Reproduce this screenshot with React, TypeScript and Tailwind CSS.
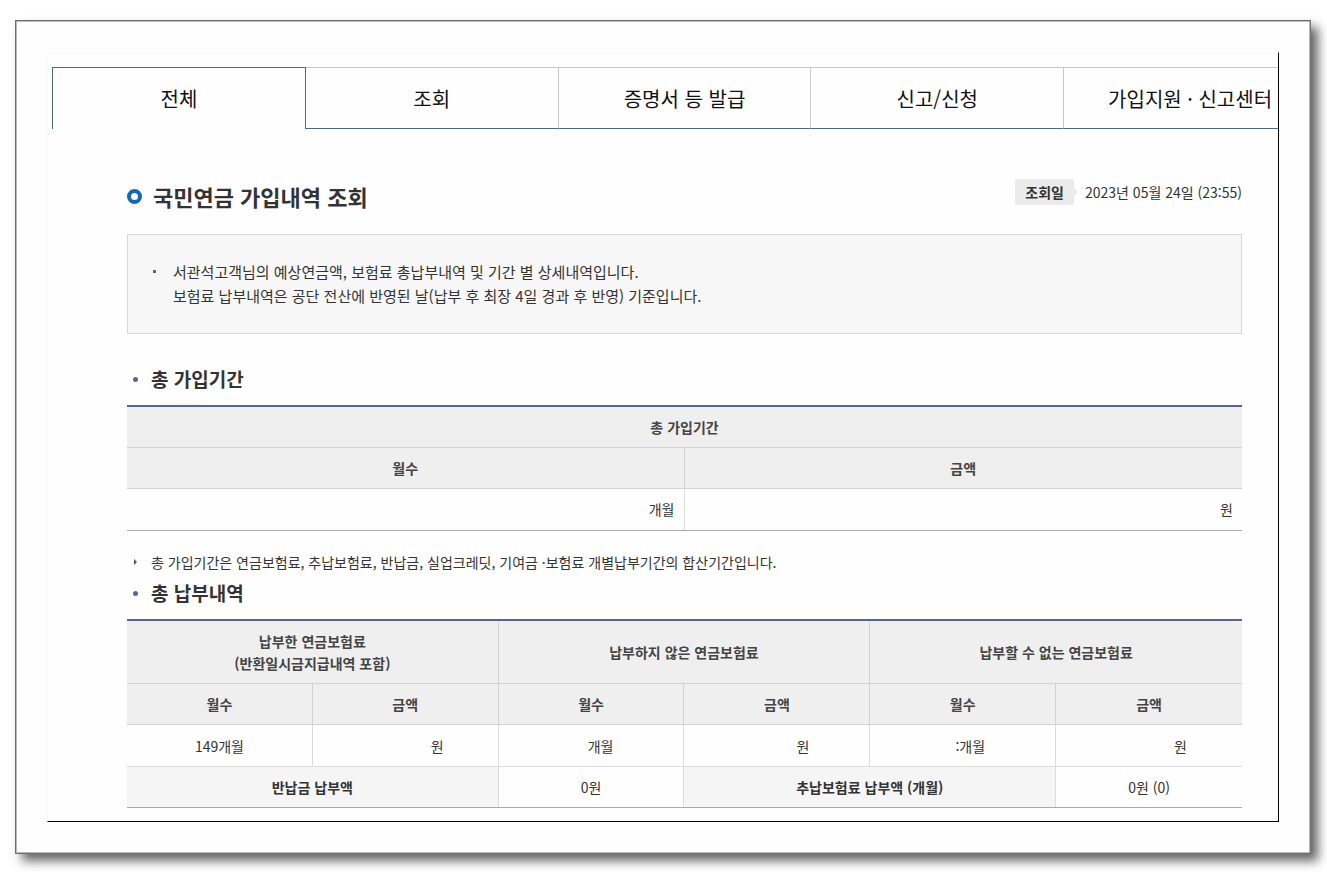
import type { ReactNode } from 'react'

const tabs = ['전체', '조회', '증명서 등 발급', '신고/신청', '가입지원 · 신고센터']

const groups = ['납부한 연금보험료', '납부하지 않은 연금보험료', '납부할 수 없는 연금보험료']

function SectionTitle({ children }: { children: ReactNode }) {
  return (
    <h3 className="flex items-center text-[19px] leading-7 font-bold text-[#333]">
      <span className="ml-1.5 mr-[13px] size-[5px] rounded-full bg-[#56659a]" />
      {children}
    </h3>
  )
}

function HeadCell({ children, span = 1 }: { children: ReactNode; span?: number }) {
  return (
    <th
      scope="col"
      colSpan={span}
      className="border-b border-r border-[#d2d2d2] last:border-r-0 bg-[#efefef] py-[9px] font-bold text-[#444]"
    >
      {children}
    </th>
  )
}

function Cell({ children, className = 'py-[9px] text-center' }: { children: ReactNode; className?: string }) {
  return (
    <td className={`border-r border-[#dcdcdc] last:border-r-0 ${className}`}>
      {children}
    </td>
  )
}

export default function App() {
  return (
    <div
      lang="ko"
      className="bg-white pt-5 pr-4 pb-[18px] pl-[15px] font-['Noto_Sans_CJK_KR',sans-serif] text-[14px] leading-[22px] text-[#333]"
    >
      <div className="border border-[#6f716f] bg-[#fefefe] p-[31px] shadow-[inset_0_0_0_1px_#b8bab8,7px_7px_10px_rgba(0,0,0,0.6)]">
        <main className="overflow-hidden border-t border-r border-b border-l border-t-[#fafafa] border-r-black border-b-black border-l-[#fafafa] pb-[13px]">
          {/* Tabs, the last one runs past the frame */}
          <nav className="mt-[14px] ml-1 flex w-[calc(100%+35px)]">
            {tabs.map((tab, i) => (
              <button
                key={tab}
                type="button"
                className={`h-[62px] flex-1 whitespace-nowrap pt-px text-[20px] text-[#111] ${
                  i === 0
                    ? 'border-t border-r border-l border-[#4b6a80]'
                    : 'border-t border-r border-b border-t-[#c8c8c8] border-r-[#c8c8c8] border-b-[#4b6a80]'
                }`}
              >
                {tab}
              </button>
            ))}
          </nav>

          <div className="pt-[50px] pr-9 pl-[79px]">
            <header className="flex items-start justify-between">
              <h2 className="flex items-center text-[22px] leading-[34px] font-bold text-[#333]">
                <span className="mr-[11px] size-[15px] rounded-full border-4 border-[#1468ad]" />
                국민연금 가입내역 조회
              </h2>
              <p className="flex items-center">
                <span className="rounded-xs bg-[#ebebeb] px-[10px] py-0.5 font-bold text-[#333]">조회일</span>
                <span className="mr-[7px] border-y-4 border-l-4 border-y-transparent border-l-[#ebebeb]" />
                2023년 05월 24일 (23:55)
              </p>
            </header>

            <div className="mt-[21px] flex border border-[#d8d8d8] bg-[#f7f7f7] px-[25px] py-[25px] text-[15px] leading-6">
              <span className="mt-[10px] mr-[17px] size-[3px] bg-[#666]" />
              <p>
                서관석고객님의 예상연금액, 보험료 총납부내역 및 기간 별 상세내역입니다.
                <br />
                보험료 납부내역은 공단 전산에 반영된 날(납부 후 최장 4일 경과 후 반영) 기준입니다.
              </p>
            </div>

            <section className="mt-[31px]">
              <SectionTitle>총 가입기간</SectionTitle>
              <table className="mt-3 w-full table-fixed border-separate border-spacing-0 border-t-2 border-b border-t-[#56678a] border-b-[#aaa]">
                <thead>
                  <tr>
                    <HeadCell span={2}>총 가입기간</HeadCell>
                  </tr>
                  <tr>
                    <HeadCell>월수</HeadCell>
                    <HeadCell>금액</HeadCell>
                  </tr>
                </thead>
                <tbody>
                  <tr>
                    <Cell className="pt-[9px] pr-[9px] pb-[10px] text-right">개월</Cell>
                    <Cell className="pt-[9px] pr-[9px] pb-[10px] text-right">원</Cell>
                  </tr>
                </tbody>
              </table>
              <p className="mt-5 flex items-center">
                <span className="mr-[14px] ml-[7px] border-y-[3px] border-l-[3px] border-y-transparent border-l-[#555]" />
                총 가입기간은 연금보험료, 추납보험료, 반납금, 실업크레딧, 기여금 ·보험료 개별납부기간의 합산기간입니다.
              </p>
            </section>

            <section className="mt-1.5">
              <SectionTitle>총 납부내역</SectionTitle>
              <table className="mt-3 w-full table-fixed border-separate border-spacing-0 border-t-2 border-b border-t-[#56678a] border-b-[#aaa]">
                <thead>
                  <tr>
                    {groups.map((group, i) => (
                      <HeadCell key={group} span={2}>
                        {group}
                        {i === 0 && (
                          <>
                            <br />
                            (반환일시금지급내역 포함)
                          </>
                        )}
                      </HeadCell>
                    ))}
                  </tr>
                  <tr>
                    {groups.map((group) => [
                      <HeadCell key={`${group}-months`}>월수</HeadCell>,
                      <HeadCell key={`${group}-amount`}>금액</HeadCell>,
                    ])}
                  </tr>
                </thead>
                <tbody>
                  <tr>
                    <Cell className="border-b pt-[10px] pb-[9px] text-center">149개월</Cell>
                    <Cell className="border-b pt-[10px] pr-[54px] pb-[9px] text-right">원</Cell>
                    <Cell className="border-b pt-[10px] pr-[70px] pb-[9px] text-right">개월</Cell>
                    <Cell className="border-b pt-[10px] pr-[60px] pb-[9px] text-right">원</Cell>
                    <Cell className="border-b pt-[10px] pr-[70px] pb-[9px] text-right">:개월</Cell>
                    <Cell className="border-b pt-[10px] pr-[55px] pb-[9px] text-right">원</Cell>
                  </tr>
                  <tr>
                    <th
                      scope="row"
                      colSpan={2}
                      className="border-r border-[#dcdcdc] bg-[#f5f5f5] py-[9px] font-bold text-[#333]"
                    >
                      반납금 납부액
                    </th>
                    <Cell>0원</Cell>
                    <th
                      scope="row"
                      colSpan={2}
                      className="border-r border-[#dcdcdc] bg-[#f5f5f5] py-[9px] font-bold text-[#333]"
                    >
                      추납보험료 납부액 (개월)
                    </th>
                    <Cell>0원 (0)</Cell>
                  </tr>
                </tbody>
              </table>
            </section>
          </div>
        </main>
      </div>
    </div>
  )
}
